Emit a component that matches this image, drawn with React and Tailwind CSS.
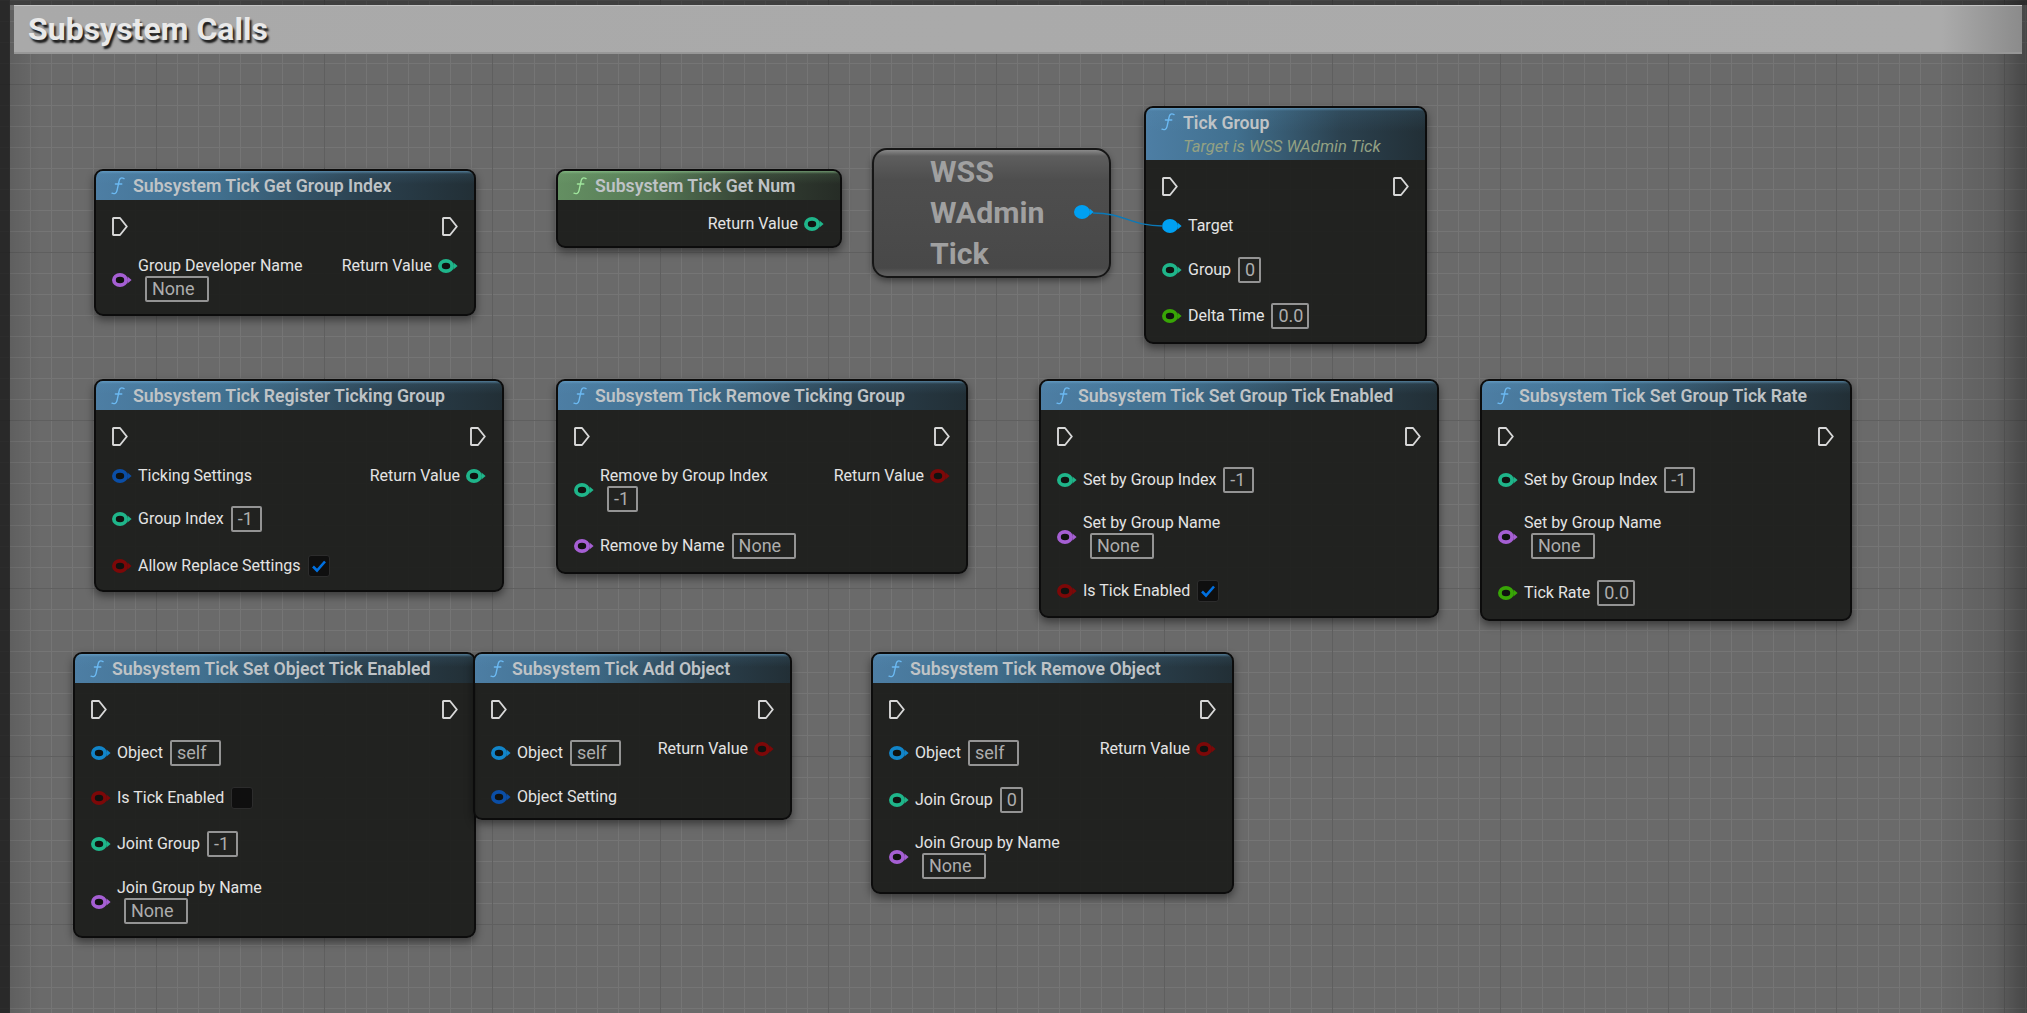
import React from 'react';

/* pin colours */
const PIN = {
  int: '#1fb58a',
  name: '#a55fd3',
  bool: '#7c0808',
  obj: '#1285c9',
  struct: '#0b4ea6',
  float: '#38a506',
};

const Exec = () => (
  <svg width="16" height="19" viewBox="0 0 16 19" className="block shrink-0">
    <path d="M1 1.5a.5.5 0 0 1 .5-.5H8l6.8 8.5L8 18H1.5a.5.5 0 0 1-.5-.5Z" fill="none" stroke="#d8d8d8" strokeWidth="1.9" strokeLinejoin="round" />
  </svg>
);

const Pin = ({ type, solid }) => {
  const c = solid ? '#00a0f2' : PIN[type];
  return (
    <svg width="20" height="16" viewBox="0 0 20 16" className="block shrink-0">
      <ellipse cx="8" cy="8" rx="6.1" ry="5.2" fill={solid ? c : '#101210'} stroke={c} strokeWidth="3.8" />
      <path d="M15.5 4.6 19.6 8l-4.1 3.4Z" fill={c} />
    </svg>
  );
};

const Func = ({ color }) => (
  <svg width="14" height="18" viewBox="0 0 14 18" className="block shrink-0">
    <path d="M13 1.6C10.6.2 8.8 1 8.2 3.6L6 13.6C5.4 16.4 3.4 17.2 1 16.2M4.4 7h6.4" fill="none" stroke={color} strokeWidth="1.4" strokeLinecap="round" />
  </svg>
);

const Box = ({ v, w }) => (
  <div className={`h-[26px] ${w} shrink-0 border-2 border-[#949494] rounded-[2px] pl-[5px] text-[18px] leading-[22px] text-[#adadad]`}>{v}</div>
);

const Check = ({ on }) => (
  <div className="w-[22px] h-[22px] shrink-0 flex items-center justify-center bg-[#0f0f0f] border border-[#2c2c2c] rounded-[3px]">
    {on && (
      <svg width="16" height="14" viewBox="0 0 16 14">
        <path d="M2 7.5 6 11.5 14 2.5" fill="none" stroke="#0070e0" strokeWidth="2.6" />
      </svg>
    )}
  </div>
);

const boxWidth = { None: 'w-[64px]', '-1': 'w-[31px]', '0': 'w-[23px]', '0.0': 'w-[38px]', self: 'w-[51px]' };

/* one pin row, label with inline value or value wrapped under it */
const Row = ({ r }) => (
  <div className={`flex items-center ${r.h}`}>
    {!r.out && <Pin type={r.t} solid={r.solid} />}
    {r.wrap ? (
      <div className="ml-[6px]">
        <div className="h-[18px] leading-[18px] mb-[1px]">{r.label}</div>
        <div className="ml-[7px]"><Box v={r.box} w={boxWidth[r.box]} /></div>
      </div>
    ) : (
      <div className="flex items-center gap-[7px] ml-[6px]">
        <span className="leading-[18px] whitespace-nowrap">{r.label}</span>
        {r.box && <Box v={r.box} w={boxWidth[r.box]} />}
        {r.check !== undefined && <Check on={r.check} />}
      </div>
    )}
    {r.out && <span className="ml-[6px]"><Pin type={r.t} /></span>}
  </div>
);

const BLUE_HEAD = 'bg-[linear-gradient(to_bottom,rgba(110,170,210,.6)_0,rgba(90,150,190,.12)_3px,transparent_45%),linear-gradient(to_right,#4d7ea4_0%,#41708f_32%,#2b414f_70%,#222f36_100%)]';
const GREEN_HEAD = 'bg-[linear-gradient(to_bottom,rgba(150,210,150,.6)_0,rgba(130,190,130,.12)_3px,transparent_45%),linear-gradient(to_right,#648f62_0%,#577a56_32%,#333f33_70%,#262c26_100%)]';

const Node = ({ pos, title, sub, green, exec = true, left = [], right = [] }) => (
  <div className={`absolute ${pos} rounded-[9px] border-2 border-[#0c0c0c] bg-[#1d1f1c]/95 shadow-[0_4px_8px_rgba(0,0,0,.45)] font-['Roboto',sans-serif] text-[16px] text-[#e4e4e4] overflow-hidden`}>
    <div className={`flex ${sub ? 'h-[52px] items-start pt-[5px]' : 'h-[29px] items-center'} pl-[15px] gap-[8px] ${green ? GREEN_HEAD : BLUE_HEAD}`}>
      <Func color={green ? '#9fe59c' : '#6bb9f2'} />
      <div>
        <div className="text-[17.7px] leading-[20px] font-semibold text-[#bfc3c6] whitespace-nowrap">{title}</div>
        {sub && <div className="text-[16.6px] leading-[20px] mt-[4px] italic text-[#93a183] whitespace-nowrap">{sub}</div>}
      </div>
    </div>
    {exec && (
      <div className="flex justify-between items-center px-4 mt-2 h-9">
        <Exec />
        <Exec />
      </div>
    )}
    <div className="flex justify-between px-4">
      <div className="flex flex-col">{left.map(r => <Row key={r.label} r={r} />)}</div>
      <div className="flex flex-col">{right.map(r => <Row key={r.label} r={{ ...r, out: true }} />)}</div>
    </div>
  </div>
);

const NODES = [
  {
    pos: 'left-[94px] top-[169px] w-[382px] h-[147px]', title: 'Subsystem Tick Get Group Index',
    left: [{ t: 'name', label: 'Group Developer Name', box: 'None', wrap: true, h: 'h-[71px]' }],
    right: [{ t: 'int', label: 'Return Value', h: 'h-[44px]' }],
  },
  {
    pos: 'left-[556px] top-[169px] w-[286px] h-[79px]', title: 'Subsystem Tick Get Num', green: true, exec: false,
    right: [{ t: 'int', label: 'Return Value', h: 'h-[48px]' }],
  },
  {
    pos: 'left-[1144px] top-[106px] w-[283px] h-[238px]', title: 'Tick Group', sub: 'Target is WSS WAdmin Tick',
    left: [
      { solid: true, label: 'Target', h: 'h-[44px]' },
      { t: 'int', label: 'Group', box: '0', h: 'h-[44px]' },
      { t: 'float', label: 'Delta Time', box: '0.0', h: 'h-[48px]' },
    ],
  },
  {
    pos: 'left-[94px] top-[379px] w-[410px] h-[213px]', title: 'Subsystem Tick Register Ticking Group',
    left: [
      { t: 'struct', label: 'Ticking Settings', h: 'h-[44px]' },
      { t: 'int', label: 'Group Index', box: '-1', h: 'h-[42px]' },
      { t: 'bool', label: 'Allow Replace Settings', check: true, h: 'h-[51px]' },
    ],
    right: [{ t: 'int', label: 'Return Value', h: 'h-[44px]' }],
  },
  {
    pos: 'left-[556px] top-[379px] w-[412px] h-[195px]', title: 'Subsystem Tick Remove Ticking Group',
    left: [
      { t: 'int', label: 'Remove by Group Index', box: '-1', wrap: true, h: 'h-[71px]' },
      { t: 'name', label: 'Remove by Name', box: 'None', h: 'h-[41px]' },
    ],
    right: [{ t: 'bool', label: 'Return Value', h: 'h-[44px]' }],
  },
  {
    pos: 'left-[1039px] top-[379px] w-[400px] h-[239px]', title: 'Subsystem Tick Set Group Tick Enabled',
    left: [
      { t: 'int', label: 'Set by Group Index', box: '-1', h: 'h-[51px]' },
      { t: 'name', label: 'Set by Group Name', box: 'None', wrap: true, h: 'h-[63px]' },
      { t: 'bool', label: 'Is Tick Enabled', check: true, h: 'h-[46px]' },
    ],
  },
  {
    pos: 'left-[1480px] top-[379px] w-[372px] h-[242px]', title: 'Subsystem Tick Set Group Tick Rate',
    left: [
      { t: 'int', label: 'Set by Group Index', box: '-1', h: 'h-[51px]' },
      { t: 'name', label: 'Set by Group Name', box: 'None', wrap: true, h: 'h-[63px]' },
      { t: 'float', label: 'Tick Rate', box: '0.0', h: 'h-[50px]' },
    ],
  },
  {
    pos: 'left-[73px] top-[652px] w-[403px] h-[286px]', title: 'Subsystem Tick Set Object Tick Enabled',
    left: [
      { t: 'obj', label: 'Object', box: 'self', h: 'h-[51px]' },
      { t: 'bool', label: 'Is Tick Enabled', check: false, h: 'h-[40px]' },
      { t: 'int', label: 'Joint Group', box: '-1', h: 'h-[52px]' },
      { t: 'name', label: 'Join Group by Name', box: 'None', wrap: true, h: 'h-[63px]' },
    ],
  },
  {
    pos: 'left-[473px] top-[652px] w-[319px] h-[168px]', title: 'Subsystem Tick Add Object',
    left: [
      { t: 'obj', label: 'Object', box: 'self', h: 'h-[51px]' },
      { t: 'struct', label: 'Object Setting', h: 'h-[37px]' },
    ],
    right: [{ t: 'bool', label: 'Return Value', h: 'h-[44px]' }],
  },
  {
    pos: 'left-[871px] top-[652px] w-[363px] h-[242px]', title: 'Subsystem Tick Remove Object',
    left: [
      { t: 'obj', label: 'Object', box: 'self', h: 'h-[51px]' },
      { t: 'int', label: 'Join Group', box: '0', h: 'h-[44px]' },
      { t: 'name', label: 'Join Group by Name', box: 'None', wrap: true, h: 'h-[69px]' },
    ],
    right: [{ t: 'bool', label: 'Return Value', h: 'h-[44px]' }],
  },
];

export default function App() {
  return (
    <div className="relative w-[2027px] h-[1013px] overflow-hidden bg-[#6a6a6a] [background-image:linear-gradient(to_right,#5f5f5f_1px,transparent_1px),linear-gradient(to_bottom,#5f5f5f_1px,transparent_1px),linear-gradient(to_right,#757575_1px,transparent_1px),linear-gradient(to_bottom,#757575_1px,transparent_1px)] [background-size:168px_168px,168px_168px,21px_21px,21px_21px] [background-position:156px_0,0_84px,9px_0,0_0]">
      {/* dark edges outside the comment box */}
      <div className="absolute left-0 top-0 bottom-0 w-[10px] bg-[#141414]/75" />
      <div className="absolute left-[10px] top-[10px] bottom-0 w-[30px] bg-[linear-gradient(to_right,rgba(0,0,0,.1),transparent)]" />
      <div className="absolute left-[10px] right-0 top-0 h-[5px] bg-black/40" />
      <div className="absolute right-0 top-0 bottom-0 w-[90px] bg-[linear-gradient(to_right,transparent,rgba(0,0,0,.1)_65%,rgba(0,0,0,.34)_100%)]" />

      {/* comment title bar */}
      <div className="relative ml-[14px] mr-[5px] mt-[5px] h-[49px] pl-[14px] flex items-center border-t border-t-[#c4c4c4] border-b-2 border-b-[#979797] bg-[linear-gradient(to_right,#a9a9a9_0%,#ababab_96%,#8b8b8b_100%)] font-['Roboto',sans-serif] font-bold text-[32px] text-[#e9e9e9] [text-shadow:2px_3px_2px_#1c1c1c]">
        Subsystem Calls
      </div>

      {NODES.map(n => <Node key={n.title} {...n} />)}

      {/* variable getter */}
      <div className="absolute left-[872px] top-[148px] w-[239px] h-[130px] rounded-[15px] border-2 border-[#161616] shadow-[0_3px_6px_rgba(0,0,0,.4)] bg-[linear-gradient(to_bottom,#8a8a8a_0,#5e5e5e_6px,#4e4e4e_30px,#484848_118px,#5e5e5e_124px)] flex items-center justify-between pl-[56px] pr-[15px] pb-[2px] font-['Roboto',sans-serif]">
        <div className="text-[30.3px] leading-[41px] font-bold text-[#a0a0a0]">
          <div>WSS</div>
          <div>WAdmin</div>
          <div>Tick</div>
        </div>
        <Pin solid />
      </div>

      {/* wire var -> Target */}
      <svg width="2027" height="1013" className="absolute left-0 top-0 pointer-events-none">
        <path d="M1093 213C1125 213 1130 226 1163 226" fill="none" stroke="#0b79b8" strokeWidth="1.4" />
      </svg>
    </div>
  );
}
